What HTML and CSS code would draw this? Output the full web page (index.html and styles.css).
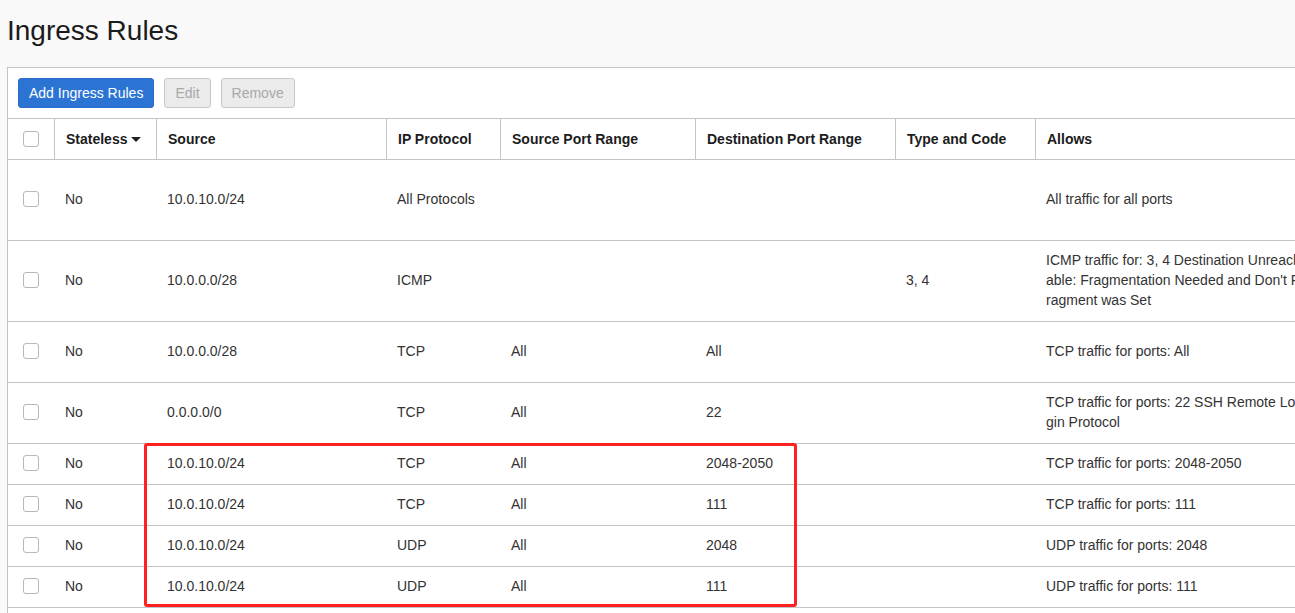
FILE: index.html
```html
<!DOCTYPE html>
<html lang="en">
<head>
<meta charset="utf-8">
<title>Ingress Rules</title>
<link rel="stylesheet" href="styles.css">
</head>
<body>
<h1 class="title">Ingress Rules</h1>
<div class="panel">
  <div class="toolbar">
    <button class="btn btn-primary">Add Ingress Rules</button>
    <button class="btn btn-disabled">Edit</button>
    <button class="btn btn-disabled">Remove</button>
  </div>
  <table class="rules">
    <colgroup>
      <col class="c-check"><col class="c-stateless"><col class="c-source"><col class="c-proto">
      <col class="c-sport"><col class="c-dport"><col class="c-type"><col class="c-allows">
    </colgroup>
    <thead>
      <tr>
        <th class="first"><span class="checkbox"></span></th>
        <th>Stateless<span class="caret"></span></th>
        <th>Source</th>
        <th>IP Protocol</th>
        <th>Source Port Range</th>
        <th>Destination Port Range</th>
        <th>Type and Code</th>
        <th>Allows</th>
      </tr>
    </thead>
    <tbody>
      <tr class="r80">
        <td class="first"><span class="checkbox"></span></td>
        <td>No</td><td>10.0.10.0/24</td><td>All Protocols</td><td></td><td></td><td></td>
        <td class="allows">All traffic for all ports</td>
      </tr>
      <tr class="r80">
        <td class="first"><span class="checkbox"></span></td>
        <td>No</td><td>10.0.0.0/28</td><td>ICMP</td><td></td><td></td><td>3, 4</td>
        <td class="allows">ICMP traffic for: 3, 4 Destination Unreachable: Fragmentation Needed and Don't Fragment was Set</td>
      </tr>
      <tr class="r60">
        <td class="first"><span class="checkbox"></span></td>
        <td>No</td><td>10.0.0.0/28</td><td>TCP</td><td>All</td><td>All</td><td></td>
        <td class="allows">TCP traffic for ports: All</td>
      </tr>
      <tr class="r60">
        <td class="first"><span class="checkbox"></span></td>
        <td>No</td><td>0.0.0.0/0</td><td>TCP</td><td>All</td><td>22</td><td></td>
        <td class="allows">TCP traffic for ports: 22 SSH Remote Login Protocol</td>
      </tr>
      <tr class="r40">
        <td class="first"><span class="checkbox"></span></td>
        <td>No</td><td>10.0.10.0/24</td><td>TCP</td><td>All</td><td>2048-2050</td><td></td>
        <td class="allows">TCP traffic for ports: 2048-2050</td>
      </tr>
      <tr class="r40">
        <td class="first"><span class="checkbox"></span></td>
        <td>No</td><td>10.0.10.0/24</td><td>TCP</td><td>All</td><td>111</td><td></td>
        <td class="allows">TCP traffic for ports: 111</td>
      </tr>
      <tr class="r40">
        <td class="first"><span class="checkbox"></span></td>
        <td>No</td><td>10.0.10.0/24</td><td>UDP</td><td>All</td><td>2048</td><td></td>
        <td class="allows">UDP traffic for ports: 2048</td>
      </tr>
      <tr class="r40">
        <td class="first"><span class="checkbox"></span></td>
        <td>No</td><td>10.0.10.0/24</td><td>UDP</td><td>All</td><td>111</td><td></td>
        <td class="allows">UDP traffic for ports: 111</td>
      </tr>
    </tbody>
  </table>
  <div class="highlight"></div>
</div>
</body>
</html>
```

FILE: styles.css
```css
html, body {
  margin: 0;
  padding: 0;
}
body {
  background: #f9f9f9;
  font-family: "Liberation Sans", Arial, sans-serif;
  font-size: 14px;
  color: #333;
  overflow: hidden;
  width: 1295px;
  height: 613px;
}
.title {
  margin: 15px 0 20px 7px;
  font-size: 28px;
  line-height: 32px;
  font-weight: normal;
  color: #1b1b1b;
}
.panel {
  position: relative;
  margin-left: 7px;
  width: 1306px;
  background: #fff;
  border: 1px solid #c4c4c8;
  padding-bottom: 20px;
}
.toolbar {
  display: flex;
  gap: 10px;
  padding: 10px;
}
.btn {
  height: 30px;
  padding: 0 10px;
  border: 1px solid;
  border-radius: 3px;
  font-family: inherit;
  font-size: 14px;
  line-height: 28px;
}
.btn-primary {
  background: #2b74d4;
  border-color: #2b6fcc;
  color: #fff;
}
.btn-disabled {
  background: #ebebeb;
  border-color: #c8c8c8;
  color: #a8a8a8;
}
.rules {
  width: 1306px;
  table-layout: fixed;
  border-collapse: separate;
  border-spacing: 0;
}
.c-check { width: 46px; }
.c-stateless { width: 102px; }
.c-source { width: 230px; }
.c-proto { width: 114px; }
.c-sport { width: 195px; }
.c-dport { width: 200px; }
.c-type { width: 140px; }
.c-allows { width: 279px; }
.rules th {
  height: 39px;
  padding: 0 10px 1px 11px;
  border-top: 1px solid #c4c4c8;
  border-bottom: 1px solid #c4c4c8;
  border-left: 1px solid #c4c4c8;
  text-align: left;
  font-weight: bold;
  color: #1c1c1c;
  vertical-align: middle;
  white-space: nowrap;
  box-sizing: content-box;
}
.rules th.first {
  border-left: 0;
  padding-left: 15px;
}
.rules td {
  padding: 0 11px 2px 11px;
  border-bottom: 1px solid #c4c4c8;
  vertical-align: middle;
  line-height: 20px;
  box-sizing: content-box;
}
.rules td.first {
  padding-left: 15px;
}
.r80 td { height: 78px; }
.r60 td { height: 58px; }
.r40 td { height: 38px; }
.rules td.allows {
  padding-left: 11px;
  word-break: break-all;
}
.checkbox {
  display: block;
  width: 14px;
  height: 14px;
  border: 1px solid #b8b8bc;
  border-radius: 3px;
  background: #fff;
}
.caret {
  display: inline-block;
  margin-left: 4px;
  vertical-align: 2px;
  border-left: 5px solid transparent;
  border-right: 5px solid transparent;
  border-top: 5px solid #222;
}
.highlight {
  position: absolute;
  left: 136px;
  top: 375px;
  width: 653px;
  height: 164px;
  box-sizing: border-box;
  border: 3px solid #ff2020;
  border-radius: 3px;
}
```
